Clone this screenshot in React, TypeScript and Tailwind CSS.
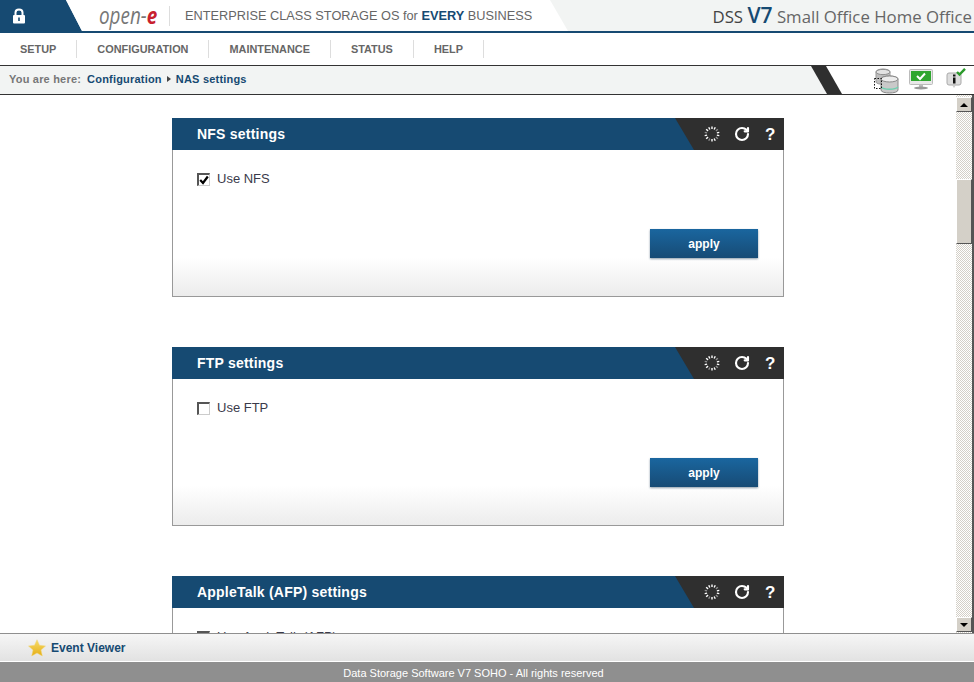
import { RotateCw } from "lucide-react";

const menu = ["SETUP", "CONFIGURATION", "MAINTENANCE", "STATUS", "HELP"];

const panels = [
  { title: "NFS settings", label: "Use NFS", checked: true },
  { title: "FTP settings", label: "Use FTP", checked: false },
];

const Spinner = () => (
  <svg width="18" height="18" viewBox="0 0 18 18" stroke="#fff" strokeWidth="1.4">
    {Array.from({ length: 14 }).map((_, i) => (
      <line
        key={i}
        x1="9"
        y1="1.5"
        x2="9"
        y2="4"
        opacity={i % 3 === 2 ? 0.45 : 1}
        transform={`rotate(${(i * 360) / 14} 9 9)`}
      />
    ))}
  </svg>
);

const PanelHeader = ({ title }: { title: string }) => (
  <div className="flex h-8 bg-[#164a72]">
    <div className="flex-1 pl-[25px] text-[14px] leading-[32px] font-bold tracking-[0.22px] text-white">
      {title}
    </div>
    <div className="flex w-[109px] items-center bg-[#2f2f2f] pl-[28px] [clip-path:polygon(0_0,100%_0,100%_100%,19px_100%)]">
      <Spinner />
      <RotateCw size={16} strokeWidth={3.2} color="#fff" className="ml-[13px]" />
      <span className="mt-[1px] ml-[15px] text-[17px] leading-none font-bold text-white">?</span>
    </div>
  </div>
);

const CheckBox = ({ checked }: { checked: boolean }) => (
  <span className="flex h-[13px] w-[13px] items-center justify-center border border-t-2 border-l-2 border-[#555] border-r-[#ccc] border-b-[#ccc] bg-white">
    {checked && (
      <svg width="10" height="10" viewBox="0 0 10 10">
        <path d="M1.2 5 L4 8 L8.8 1.5" fill="none" stroke="#000" strokeWidth="2.2" />
      </svg>
    )}
  </span>
);

const Panel = ({ title, label, checked }: { title: string; label: string; checked: boolean }) => (
  <div className="mb-[50px] w-[612px]">
    <PanelHeader title={title} />
    <div className="h-[147px] border-x border-b border-[#999] bg-[linear-gradient(#fff_0,#fff_107px,#ececec_100%)] pt-[22px]">
      <div className="flex items-center gap-[7px] pl-[24px] text-[13px] leading-[14px] text-[#3a3a4a]">
        <CheckBox checked={checked} />
        <span>{label}</span>
      </div>
      <div className="mt-[43px] flex justify-end pr-[25px]">
        <button className="h-[29px] w-[108px] bg-[linear-gradient(#1a669f,#174b75)] text-[12px] font-bold text-white shadow-[0_1px_2px_#8a9aa8]">
          apply
        </button>
      </div>
    </div>
  </div>
);

const DiskIcon = () => (
  <svg width="26" height="26" viewBox="0 0 26 26">
    <path d="M2 4 C2 0 16 0 16 4 V14 C16 17 2 17 2 14 Z" fill="#bdbdbd" stroke="#999" />
    <ellipse cx="9" cy="4" rx="7" ry="2.6" fill="#e2e2e2" stroke="#8f8f8f" />
    <path d="M7 11 C7 7 24 7 24 11 V22 C24 26 7 26 7 22 Z" fill="#c9c9c9" stroke="#8a8a8a" />
    <ellipse cx="15.5" cy="11" rx="8.5" ry="3" fill="#ececec" stroke="#8a8a8a" />
    <path d="M7 19 C10 22 21 22 24 19" fill="none" stroke="#6fd0b0" strokeWidth="1.5" />
    <rect x="0.5" y="10.5" width="7" height="10" fill="none" stroke="#111" strokeDasharray="1.5 1.5" />
  </svg>
);

const MonitorIcon = () => (
  <svg width="24" height="22" viewBox="0 0 24 22">
    <rect x="0.5" y="0.5" width="23" height="15" rx="1" fill="#e8e8e8" stroke="#bbb" />
    <rect x="2" y="2" width="20" height="10" fill="#2fa62f" />
    <path d="M8 7 L11 10 L16 4.5" fill="none" stroke="#fff" strokeWidth="2" />
    <rect x="10" y="16" width="4" height="2" fill="#bbb" />
    <ellipse cx="12" cy="19" rx="7" ry="1.5" fill="#999" />
  </svg>
);

const InfoIcon = () => (
  <svg width="20" height="22" viewBox="0 0 20 22">
    <rect x="1" y="5" width="14" height="12" rx="2" fill="#ddd" stroke="#aaa" />
    <path d="M6 17 L8 20 L10 17 Z" fill="#ccc" />
    <rect x="7" y="6.5" width="2.5" height="2" fill="#111" />
    <rect x="7" y="9.5" width="2.5" height="6" fill="#111" />
    <path d="M11 4 L13.5 6.5 L19 0.8" fill="none" stroke="#2b9a2b" strokeWidth="2.4" />
  </svg>
);

const Star = () => (
  <svg width="18" height="18" viewBox="0 0 18 18">
    <defs>
      <linearGradient id="star" x1="0" y1="0" x2="0" y2="1">
        <stop offset="0" stopColor="#f7dc6a" />
        <stop offset="1" stopColor="#e5ae16" />
      </linearGradient>
    </defs>
    <path d="M9 .8 L11.5 6.3 L17.5 7 L13 11 L14.3 17 L9 14 L3.7 17 L5 11 L.5 7 L6.5 6.3 Z" fill="url(#star)" stroke="#f1d67a" strokeWidth=".5" />
  </svg>
);

const Scrollbar = () => (
  <div className="flex w-[18px] flex-col border-r-2 border-[#555] bg-[repeating-conic-gradient(#d4d0c8_0_25%,#fff_0_50%)] bg-[length:2px_2px] pt-[2px]">
    <div className="flex h-[15px] w-[16px] items-center justify-center border border-[#fff] border-r-[#555] border-b-[#555] bg-[#d4d0c8]">
      <div className="h-0 w-0 border-x-[4px] border-b-[4px] border-x-transparent border-b-black" />
    </div>
    <div className="mt-[67px] h-[65px] w-[16px] border border-[#fff] border-r-[#555] border-b-[#555] bg-[#d4d0c8]" />
    <div className="flex-1" />
    <div className="mb-[1px] flex h-[15px] w-[16px] items-center justify-center border border-[#fff] border-r-[#555] border-b-[#555] bg-[#d4d0c8]">
      <div className="h-0 w-0 border-x-[4px] border-t-[4px] border-x-transparent border-t-black" />
    </div>
  </div>
);

export default function App() {
  return (
    <div className="flex h-screen flex-col overflow-hidden bg-white font-['Liberation_Sans',Arial,sans-serif]">
      {/* top banner */}
      <div className="relative flex h-[33px] shrink-0 border-b-2 border-[#164a72] bg-[#f2f4f3]">
        <div className="flex w-[82px] items-center bg-[#164a72] pl-[12px] [clip-path:polygon(0_0,66px_0,100%_100%,0_100%)]">
          <svg width="14" height="16" viewBox="0 0 14 16">
            <path d="M3.5 7 V4.5 C3.5 0.5 10.5 0.5 10.5 4.5 V7" fill="none" stroke="#fff" strokeWidth="2" />
            <rect x="1" y="7" width="12" height="8.5" rx="1" fill="#fff" />
            <rect x="6.2" y="9.5" width="1.6" height="3.5" fill="#164a72" />
          </svg>
        </div>
        <div className="-ml-[16px] flex w-[502px] items-center bg-white pl-[33px] [clip-path:polygon(0_0,484px_0,100%_100%,16px_100%)]">
          <span className="w-[70px] font-['Open_Sans',sans-serif] text-[23px] leading-none whitespace-nowrap italic text-[#777]">
            <span className="inline-block origin-left scale-x-[0.82]">
              open-<span className="font-bold text-[#c8202f]">e</span>
            </span>
          </span>
          <span className="h-[20px] border-l border-[#ddd]" />
          <span className="ml-[15px] text-[12.75px] whitespace-nowrap text-[#666]">
            ENTERPRISE CLASS STORAGE OS for <span className="font-bold text-[#164a72]">EVERY</span> BUSINESS
          </span>
        </div>
        <div className="ml-auto pr-[2px] font-['Open_Sans',sans-serif] text-[16.8px] leading-[31px] whitespace-nowrap text-[#666]">
          <span className="text-[#444]">DSS </span>
          <span className="text-[21px] font-semibold text-[#164a72]">V7</span> Small Office Home Office
        </div>
      </div>

      {/* menu */}
      <nav className="flex h-[32px] shrink-0 items-center bg-white">
        {menu.map((m) => (
          <div key={m} className="flex h-[18px] items-center border-r border-[#ddd] px-[20px] text-[10.9px] font-bold text-[#666]">
            {m}
          </div>
        ))}
      </nav>

      {/* breadcrumb */}
      <div className="flex h-[30px] shrink-0 border-y border-[#333] bg-white">
        <div className="flex w-[842px] items-center bg-[#f2f4f3] pb-[2px] pl-[9px] text-[11px] font-bold tracking-[0.2px] [clip-path:polygon(0_0,811px_0,100%_100%,0_100%)]">
          <span className="text-[#777]">You are here:</span>
          <span className="ml-[6px] text-[#164a72]">Configuration</span>
          <span className="mr-[5px] ml-[5px] h-0 w-0 border-y-[3.5px] border-l-[4px] border-y-transparent border-l-[#444]" />
          <span className="text-[#164a72]">NAS settings</span>
        </div>
        <div className="-ml-[31px] h-full w-[31px] bg-[#2f2f2f] [clip-path:polygon(0_0,15px_0,100%_100%,16px_100%)]" />
        <div className="mt-[2px] ml-[32px] flex items-start">
          <DiskIcon />
          <div className="mt-[1px] ml-[9px]"><MonitorIcon /></div>
          <div className="ml-[13px]"><InfoIcon /></div>
        </div>
      </div>

      {/* content */}
      <div className="flex min-h-0 flex-1">
        <main className="min-w-0 flex-1 overflow-hidden pt-[23px] pl-[172px]">
          {panels.map((p) => (
            <Panel key={p.title} {...p} />
          ))}
          <Panel title="AppleTalk (AFP) settings" label="Use AppleTalk (AFP)" checked={false} />
        </main>
        <Scrollbar />
      </div>

      {/* event viewer */}
      <div className="flex h-[29px] shrink-0 items-center border-t border-[#8f8f8f] border-b border-b-white bg-[linear-gradient(#f6f6f6,#e2e2e2)] pl-[28px]">
        <Star />
        <span className="ml-[5px] text-[12px] font-bold text-[#164a72]">Event Viewer</span>
      </div>
      <div className="h-[20px] shrink-0 bg-[#8f8f8f] pt-[2px] pr-[27px] text-center text-[11px] leading-[18px] text-white">
        Data Storage Software V7 SOHO - All rights reserved
      </div>
    </div>
  );
}
